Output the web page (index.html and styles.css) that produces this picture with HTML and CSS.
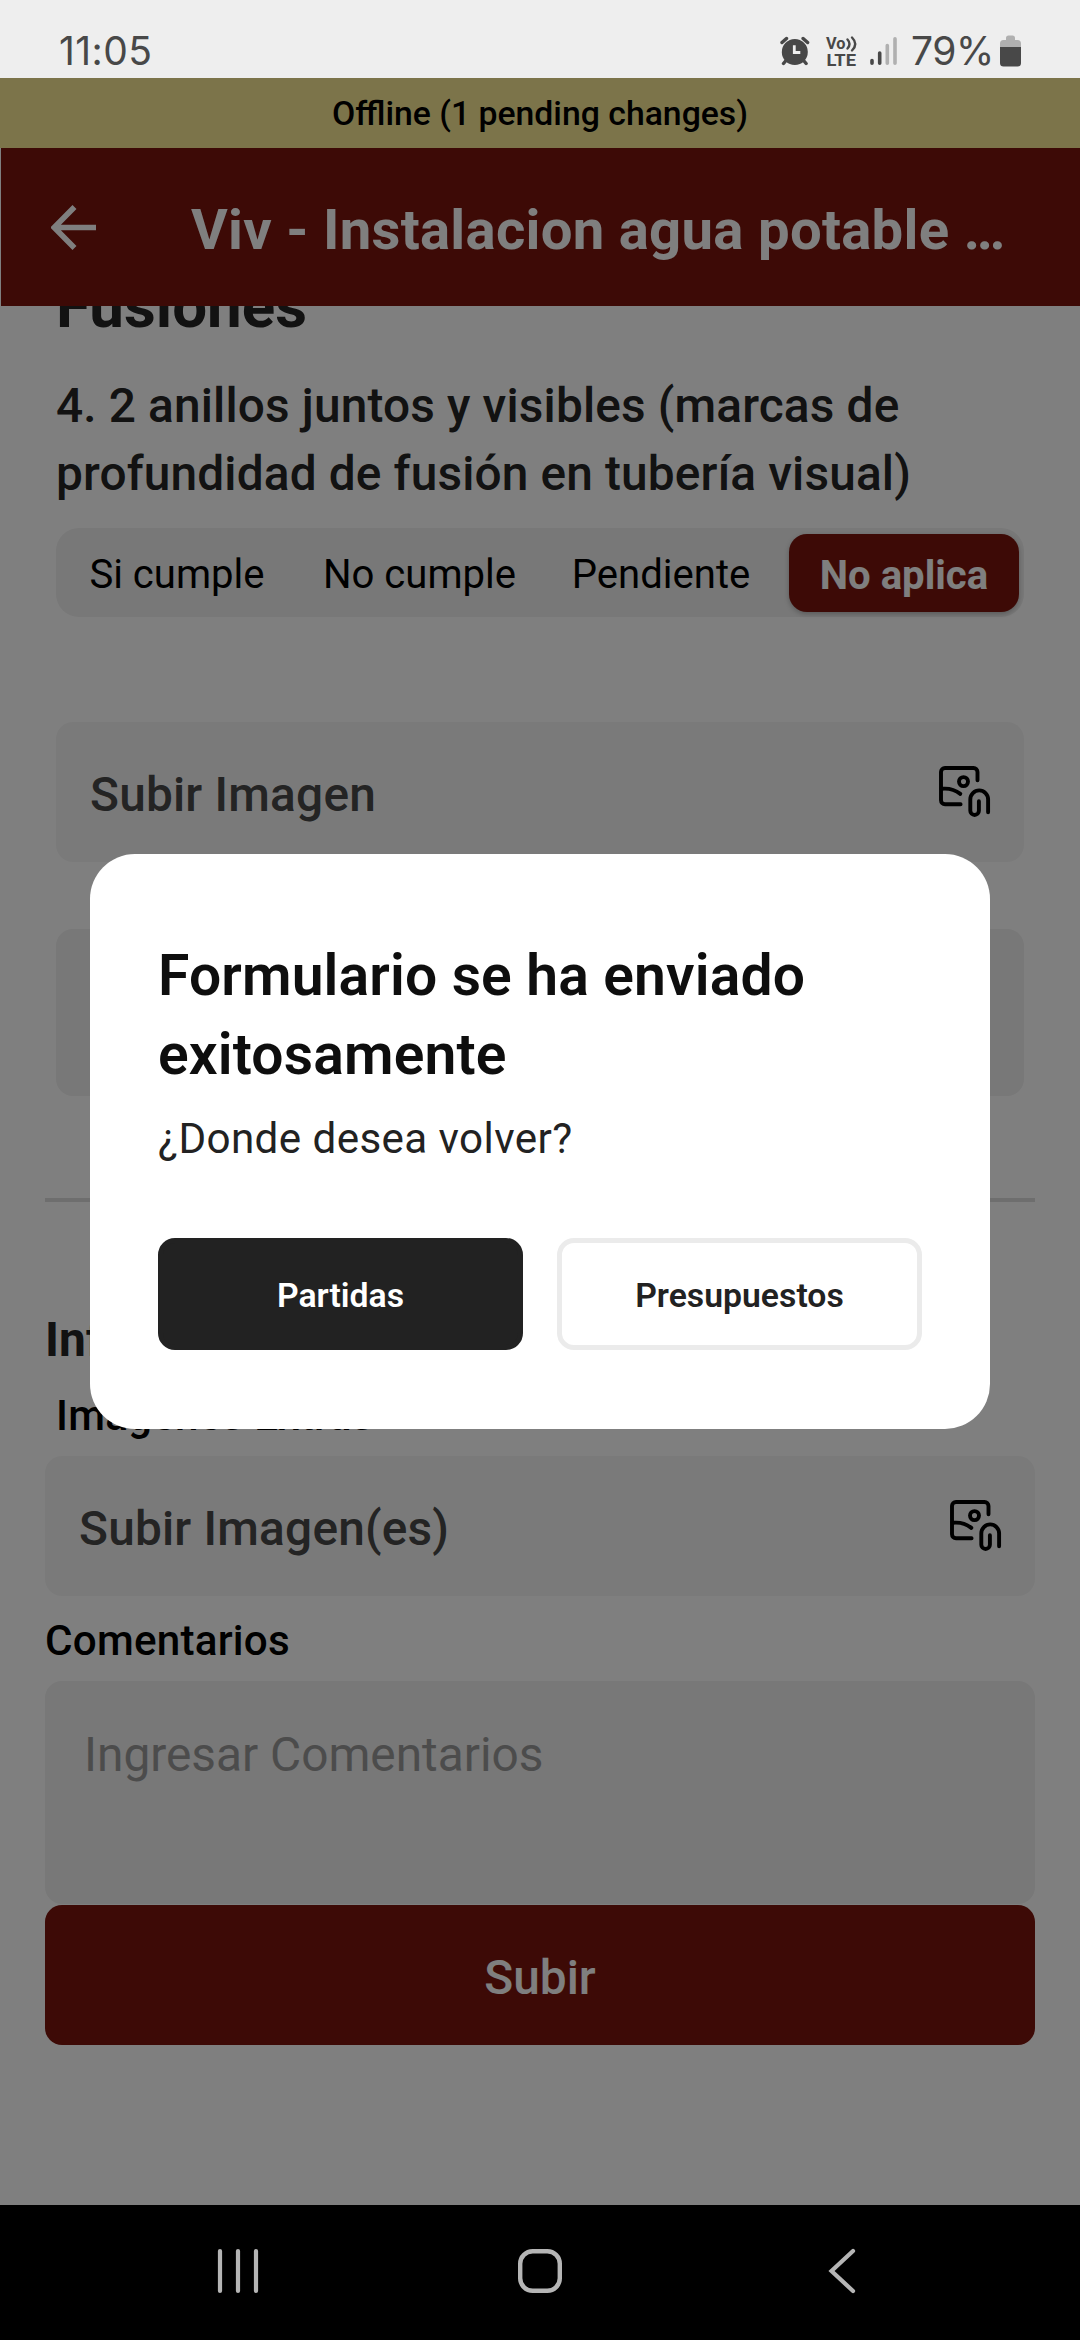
FILE: index.html
```html
<!DOCTYPE html>
<html lang="es">
<head>
<meta charset="utf-8">
<title>Viv - Instalacion agua potable</title>
<link rel="stylesheet" href="styles.css">
</head>
<body>
<svg class="sprite" aria-hidden="true">
  <symbol id="attach-image" viewBox="0 0 52 52">
    <g fill="none" stroke="#000" stroke-width="3.9" stroke-linecap="round" stroke-linejoin="round">
      <path d="M38.5 14.3V6a4 4 0 0 0-4-4H6a4 4 0 0 0-4 4v28.3a4 4 0 0 0 4 4h15.6"/>
      <circle cx="24.5" cy="15.6" r="4.5"/>
      <path d="M2.5 22.8C9.500 22 16 23.700 21.300 27.900"/>
      <path d="M49.100 46.200V33.300a8.900 8.900 0 0 0-17.800 0v11.400a4.300 4.300 0 0 0 8.600 0V35.300"/>
    </g>
  </symbol>
</svg>
<div class="phone">
  <header class="status">
    <span class="clock">11:05</span>
    <div class="indicators">
      <svg class="alarm" viewBox="0 0 30 30">
        <circle cx="14.800" cy="16" r="13" fill="#484848"/>
        <path d="M2 6.500L6.500 2.500M27.600 6.500L23.100 2.500M6 24.500L3.500 27.500M23.600 24.500L26.100 27.500" stroke="#484848" stroke-width="3.400" stroke-linecap="round"/>
        <path d="M14.300 9.300v7.200h6" fill="none" stroke="#efefef" stroke-width="2.800"/>
      </svg>
      <svg class="volte" viewBox="0 0 32 40">
        <text x="0" y="17" class="lte" textLength="19.500" lengthAdjust="spacingAndGlyphs">Vo</text>
        <path d="M21.500 7.500q4 4.500 0 9M26 5.500q6.500 6.500 0 13" fill="none" stroke="#484848" stroke-width="2.400" stroke-linecap="round"/>
        <text x="0.500" y="34.300" class="lte" textLength="29.500" lengthAdjust="spacingAndGlyphs">LTE</text>
      </svg>
      <svg class="signal" viewBox="0 0 28 30" stroke-width="3.600" stroke-linecap="round">
        <path d="M2 24.500v2.700M9.700 17v10.200" stroke="#484848"/>
        <path d="M17.300 9.500v17.700M25 2.700v24.500" stroke="#b0b0b0"/>
      </svg>
      <span class="percent">79%</span>
      <svg class="battery" viewBox="0 0 21 32">
        <path d="M0 12V8.500a3.500 3.500 0 0 1 3.500-3.500H6V3a2.500 2.500 0 0 1 2.500-2.500h4A2.500 2.500 0 0 1 15 3v2h2.500A3.500 3.500 0 0 1 21 8.500V12z" fill="#b0b0b0"/>
        <path d="M0 12h21v16a3.500 3.500 0 0 1-3.500 3.500h-14A3.500 3.500 0 0 1 0 28z" fill="#484848"/>
      </svg>
    </div>
  </header>

  <main class="app">
    <div class="banner">Offline (1 pending changes)</div>
    <div class="toolbar">
      <svg class="back" viewBox="0 0 45 45"><path d="M45 22.500H4M23.500 2L3.200 22.500l20.300 20.500" fill="none" stroke="#fff" stroke-width="5.600"/></svg>
      <h1 class="title">Viv - Instalacion agua potable …</h1>
    </div>
    <div class="content">
      <section class="group">
        <h2 class="group-title">Fusiones</h2>
        <p class="question">4. 2 anillos juntos y visibles (marcas de<br>profundidad de fusión en tubería visual)</p>
        <div class="segments">
          <span class="segment si">Si cumple</span>
          <span class="segment no">No cumple</span>
          <span class="segment pe">Pendiente</span>
          <span class="segment selected">No aplica</span>
        </div>
        <div class="upload"><span>Subir Imagen</span><svg class="attach"><use href="#attach-image"/></svg></div>
        <div class="note"></div>
      </section>
      <hr class="divider">
      <h3 class="info">Información</h3>
      <p class="label extra">Imagenes Extras</p>
      <div class="upload multi"><span>Subir Imagen(es)</span><svg class="attach"><use href="#attach-image"/></svg></div>
      <p class="label">Comentarios</p>
      <div class="comments">Ingresar Comentarios</div>
      <div class="submit">Subir</div>
    </div>
    <div class="scrim">
      <div class="dialog">
        <h2 class="dialog-title">Formulario se ha enviado<br>exitosamente</h2>
        <p class="dialog-text">¿Donde desea volver?</p>
        <div class="actions">
          <span class="action primary">Partidas</span>
          <span class="action">Presupuestos</span>
        </div>
      </div>
    </div>
  </main>

  <nav class="navbar">
    <svg viewBox="0 0 48 48"><path d="M6 4v40M24 4v40M42 4v40" stroke="#b5b5b5" stroke-width="4.200" stroke-linecap="round"/></svg>
    <svg viewBox="0 0 48 48"><rect x="4.200" y="4.200" width="39.600" height="39.600" rx="12.500" fill="none" stroke="#b5b5b5" stroke-width="4.400"/></svg>
    <svg viewBox="0 0 48 48"><path d="M35 4L13.500 24 35 44" fill="none" stroke="#b5b5b5" stroke-width="4.200" stroke-linecap="round"/></svg>
  </nav>
</div>
</body>
</html>
```

FILE: styles.css
```css
* { box-sizing: border-box; }
body { margin: 0; font-family: Roboto, sans-serif; background: #000; }
h1, h2, h3, p { margin: 0; }
.sprite { display: none; }
.phone { width: 1080px; height: 2340px; display: flex; flex-direction: column; overflow: hidden; }

.status { height: 78px; flex: none; background: #eee; color: #484848; display: flex; justify-content: space-between; padding: 27px 59px 0 59px; font: 400 39px/48px Inter, sans-serif; }
.clock { letter-spacing: .4px; }
.indicators { display: flex; }
.indicators svg { display: block; flex: none; }
.alarm { width: 30px; height: 30px; margin: 9px 16px 0 0; }
.volte { width: 32px; height: 40px; margin: 5px 12px 0 0; overflow: visible; }
.lte { font: 700 17px/20px Roboto, sans-serif; fill: #484848; }
.signal { width: 28px; height: 30px; margin: 9px 13px 0 0; }
.percent { width: 81px; margin-right: 8px; letter-spacing: -.4px; white-space: nowrap; }
.battery { width: 21px; height: 32px; margin-top: 8px; }

.app { position: relative; flex: 1; min-height: 0; display: flex; flex-direction: column; background: #fff; overflow: hidden; }
.banner { height: 70px; flex: none; background: #f8e894; color: #000; text-align: center; font-size: 33.750px; font-weight: 500; line-height: 72px; }
.toolbar { height: 158px; flex: none; margin-left: 1px; background: #7a140c; display: flex; align-items: center; padding-left: 50px; color: #fff; }
.back { width: 45px; height: 45px; }
.title { margin: 6px 0 0 95px; font-size: 56.250px; font-weight: 700; line-height: 66px; letter-spacing: .28px; white-space: nowrap; }

.content { flex: 1; min-height: 0; overflow: hidden; padding: 0 45px; display: flex; flex-direction: column; }
.content > *, .group > * { flex: none; }
.group { margin: -36px 11px 0; display: flex; flex-direction: column; }
.group-title { font-size: 61.900px; font-weight: 700; line-height: 72px; color: #242424; }
.question { margin-top: 30px; font-size: 47.800px; font-weight: 500; line-height: 68px; letter-spacing: .15px; color: #242424; white-space: nowrap; }
.segments { margin-top: 20px; height: 89px; border-radius: 23px; background: #f0f0f0; display: flex; align-items: center; padding-right: 5px; font-size: 40.100px; }
.segment { flex: none; text-align: center; white-space: nowrap; color: #000; line-height: 78px; padding-top: 5px; }
.si { width: 242px; }
.no { width: 243px; }
.pe { width: 240px; }
.selected { margin-left: auto; margin-top: 1px; padding-top: 3px; width: 230px; height: 78px; border-radius: 18px; background: #7a140c; color: #fff; font-weight: 700; box-shadow: 0 2px 5px rgba(0,0,0,.25); }
.upload { margin-top: 105px; height: 140px; border-radius: 17px; background: #f5f5f5; display: flex; align-items: center; justify-content: space-between; padding: 0 33px 0 34px; font-size: 47.800px; font-weight: 500; letter-spacing: .2px; color: #484848; }
.upload span { line-height: 60px; margin-top: 6px; }
.attach { width: 52px; height: 52px; }
.note { margin-top: 67px; height: 167px; border-radius: 17px; background: #f0f0f0; }
.divider { width: 100%; height: 4px; margin: 102px 0 0; border: 0; background: #dcdcdc; }
.info { margin-top: 110px; font-size: 47.800px; font-weight: 700; line-height: 56px; color: #242424; }
.label { margin-top: 20px; font-size: 42.200px; font-weight: 500; line-height: 50px; letter-spacing: .22px; color: #000; }
.extra { margin: 23px 0 0 11px; }
.multi { margin-top: 15px; }
.comments { margin-top: 15px; height: 223px; border-radius: 17px; background: #f0f0f0; padding: 44px 39px; font-size: 47.800px; line-height: 60px; color: #999; }
.submit { margin-top: 1px; height: 140px; border-radius: 17px; background: #7a140c; color: #fff; text-align: center; font-size: 47.800px; font-weight: 500; line-height: 146px; }

.scrim { position: absolute; inset: 0; background: rgba(0,0,0,.5); display: flex; flex-direction: column; align-items: center; justify-content: center; }
.dialog { width: 900px; height: 575px; border-radius: 45px; background: #fff; padding: 82px 68px 0; }
.dialog-title { font-size: 57px; font-weight: 600; line-height: 79px; letter-spacing: .15px; color: #0e0e0e; white-space: nowrap; }
.dialog-text { margin-top: 15px; font-size: 42.200px; line-height: 60px; letter-spacing: .4px; color: #222; }
.actions { margin-top: 69px; display: grid; grid-template-columns: 1fr 1fr; gap: 34px; }
.action { height: 112px; border-radius: 17px; border: 5px solid #ebebeb; text-align: center; font-size: 33.750px; font-weight: 600; line-height: 105px; color: #222; }
.primary { background: #222; border-color: #222; color: #fff; }

.navbar { height: 135px; flex: none; padding-bottom: 3px; background: #000; display: grid; grid-template-columns: repeat(3, 302px); justify-content: center; align-items: center; justify-items: center; }
.navbar svg { width: 48px; height: 48px; display: block; }
```
